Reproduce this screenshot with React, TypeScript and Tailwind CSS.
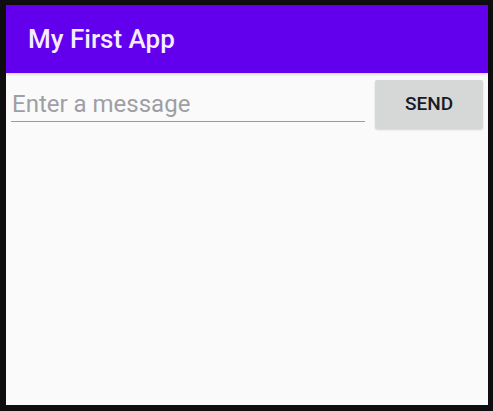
export default function App() {
  return (
    <div className="h-[411px] w-[493px] bg-[#0f0d0f] pt-[5px] pr-[5px] pb-[6px] pl-[6px]" style={{ fontFamily: "Roboto, 'Liberation Sans', sans-serif" }}>
      <div className="flex h-full flex-col bg-[#fafafa]">
        <header className="flex h-[68px] items-center bg-[#6200ee] pl-[22px] shadow-[0_1px_3px_rgba(0,0,0,0.2)]">
          <h1 className="text-[26px] font-medium text-[#f6ecfe]">My First App</h1>
        </header>
        <div className="flex items-start pt-[7px] pl-[5px] pr-[5px]">
          <div className="mr-[10px] flex-1 pt-[10px]">
            <input
              placeholder="Enter a message"
              className="h-[32px] w-full border-b-[1.5px] border-[#9a9a9a] bg-transparent px-[1px] pb-[3px] text-[24px] text-gray-900 outline-none placeholder:text-[#9e9ea4]"
            />
          </div>
          <button className="h-[49px] w-[108px] rounded-[2px] bg-[#d6d7d7] text-[19px] font-medium text-[#1a1a24] shadow-[0_1px_2px_rgba(0,0,0,0.15)]">
            SEND
          </button>
        </div>
      </div>
    </div>
  )
}
